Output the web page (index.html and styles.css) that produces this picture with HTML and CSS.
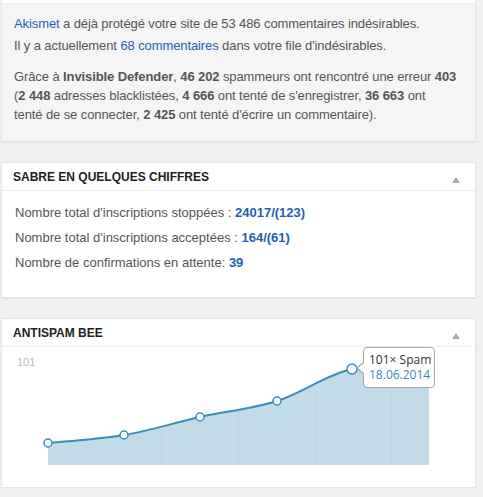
FILE: index.html
```html
<!DOCTYPE html>
<html lang="fr">
<head>
<meta charset="utf-8">
<link rel="stylesheet" href="styles.css">
</head>
<body>
<div class="wrap">
  <div class="postbox first">
    <div class="stub"></div>
    <div class="sub">
      <p class="lead"><a href="#">Akismet</a> a déjà protégé votre site de 53 486 commentaires indésirables.<br>Il y a actuellement <a href="#">68 commentaires</a> dans votre file d'indésirables.</p>
      <p class="defender">Grâce à <b>Invisible Defender</b>, <b>46 202</b> spammeurs ont rencontré une erreur <b>403</b> (<b>2 448</b> adresses blacklistées, <b>4 666</b> ont tenté de s'enregistrer, <b>36 663</b> ont<br>tenté de se connecter, <b>2 425</b> ont tenté d'écrire un commentaire).</p>
    </div>
  </div>

  <div class="postbox">
    <div class="hndle"><h3>SABRE EN QUELQUES CHIFFRES</h3><span class="toggle"></span></div>
    <div class="inside">
      <p>Nombre total d'inscriptions stoppées : <a class="num" href="#">24017/(123)</a></p>
      <p>Nombre total d'inscriptions acceptées : <a class="num" href="#">164/(61)</a></p>
      <p>Nombre de confirmations en attente: <a class="num" href="#">39</a></p>
    </div>
  </div>

  <div class="postbox">
    <div class="hndle"><h3>ANTISPAM BEE</h3><span class="toggle"></span></div>
    <div class="chart">
      <svg class="graph" width="473" height="140" viewBox="0 0 473 140">
        <text x="15" y="19" class="ylabel">101</text>
        <path class="area" d="M46,96 C58.7,94.7 96.7,92.3 122,88 C147.3,83.7 172.5,75.7 198,70 C223.5,64.3 249.7,62 275,54 C300.3,46 324.7,27.3 350,22 C375.3,16.7 414.2,22 427,22 L427,118 L46,118 Z"/>
        <line class="grid" x1="160" y1="82" x2="160" y2="118"/>
        <line class="grid" x1="236" y1="62" x2="236" y2="118"/>
        <line class="grid" x1="313" y1="42" x2="313" y2="118"/>
        <line class="grid" x1="389" y1="20" x2="389" y2="118"/>
        <path class="line" d="M46,96 C58.7,94.7 96.7,92.3 122,88 C147.3,83.7 172.5,75.7 198,70 C223.5,64.3 249.7,62 275,54 C300.3,46 324.7,27.3 350,22 C375.3,16.7 414.2,22 427,22"/>
        <circle class="pt" cx="46" cy="96" r="4"/>
        <circle class="pt" cx="122" cy="88" r="4"/>
        <circle class="pt" cx="198" cy="70" r="4"/>
        <circle class="pt" cx="275" cy="54" r="4"/>
        <circle class="pt" cx="427" cy="22" r="4"/>
        <circle class="pt" cx="350" cy="22" r="5"/>
      </svg>
      <div class="tip"><span class="tip-count">101× Spam</span><span class="tip-date">18.06.2014</span></div>
    </div>
  </div>
</div>
</body>
</html>
```

FILE: styles.css
```css
html, body {
  margin: 0;
  padding: 0;
  background: #f1f1f1;
}
body {
  font-family: "Liberation Sans", Arial, sans-serif;
  font-size: 13px;
  color: #555;
}
a {
  color: #1f5fb0;
  text-decoration: none;
}
b {
  font-weight: bold;
  color: #555;
}
.wrap {
  width: 475px;
  margin-left: 1px;
  display: flex;
  flex-direction: column;
  gap: 20px;
}
.postbox {
  background: #fff;
  border: 1px solid #e5e5e5;
  box-shadow: 0 1px 1px rgba(0,0,0,0.05);
  box-sizing: border-box;
}
.postbox.first {
  border-top: none;
}
.stub {
  height: 3px;
  background: #fff;
}
.sub {
  background: #f5f5f5;
  border-top: 1px solid #eee;
  padding: 9px 6px 17px 12px;
  letter-spacing: -0.1px;
}
.sub p {
  margin: 0;
}
.lead {
  line-height: 22px;
}
.defender {
  line-height: 19px;
  margin-top: 10px !important;
}
.hndle {
  height: 27px;
  border-bottom: 1px solid #eee;
  display: flex;
  align-items: center;
  justify-content: space-between;
  padding: 0 15px 0 11px;
}
.hndle h3 {
  margin: 0;
  font-size: 12px;
  font-weight: bold;
  color: #222;
}
.toggle {
  width: 0;
  height: 0;
  border-left: 4px solid transparent;
  border-right: 4px solid transparent;
  border-bottom: 6px solid #aaa;
  margin-top: 6px;
}
.inside {
  padding: 12px 12px 25px 13px;
}
.inside p {
  margin: 0 0 6px;
  line-height: 19px;
}
.inside p:last-child {
  margin-bottom: 0;
}
.num {
  font-weight: bold;
}
.chart {
  position: relative;
  height: 140px;
}
.graph {
  display: block;
}
.ylabel {
  font-family: "Liberation Sans", Arial, sans-serif;
  font-size: 11px;
  fill: #bbb;
}
.area {
  fill: #c1dbe8;
}
.grid {
  stroke: #b9d4e1;
  stroke-width: 1;
}
.line {
  fill: none;
  stroke: #3a8cba;
  stroke-width: 2;
}
.pt {
  fill: #fff;
  stroke: #3a8cba;
  stroke-width: 1.5;
}
.tip {
  position: absolute;
  left: 361px;
  top: 0;
  width: 72px;
  height: 41px;
  box-sizing: border-box;
  background: #fff;
  border: 1px solid #a8a8a8;
  border-radius: 4px;
  padding: 4px 0 0 5px;
  display: flex;
  flex-direction: column;
  font-family: "Open Sans", sans-serif;
  font-size: 12px;
  line-height: 15px;
  white-space: nowrap;
}
.tip::before {
  content: "";
  position: absolute;
  left: -8px;
  top: 13px;
  border-top: 7px solid transparent;
  border-bottom: 7px solid transparent;
  border-right: 8px solid #a8a8a8;
}
.tip::after {
  content: "";
  position: absolute;
  left: -6px;
  top: 14px;
  border-top: 6px solid transparent;
  border-bottom: 6px solid transparent;
  border-right: 7px solid #fff;
}
.tip-count {
  color: #333;
}
.tip-date {
  color: #3f87b5;
}
```
